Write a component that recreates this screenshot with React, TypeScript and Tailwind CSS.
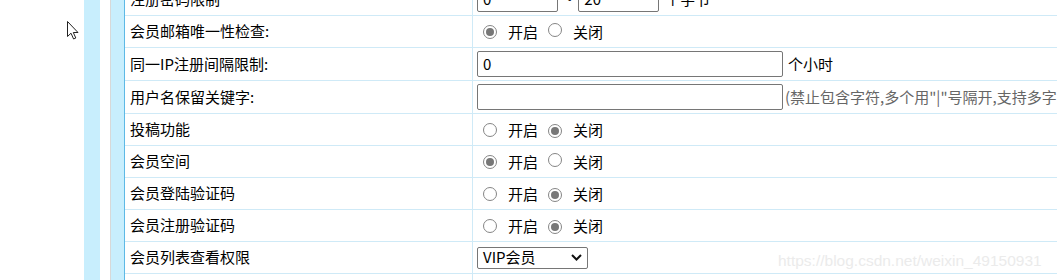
import React from 'react';

const font = "font-['Microsoft_YaHei','Noto_Sans_CJK_SC',sans-serif]";

function Radio({ checked }: { checked?: boolean }) {
  return (
    <span className="inline-flex h-[14px] w-[14px] shrink-0 items-center justify-center rounded-full border border-[#858585] bg-white">
      {checked && <span className="h-[8px] w-[8px] rounded-full bg-[#777]" />}
    </span>
  );
}

function OnOff({ on }: { on: boolean }) {
  return (
    <div className="flex items-center pl-[6px]">
      <Radio checked={on} />
      <span className="ml-[11px] leading-[20px]">开启</span>
      <span className="ml-[10px]">
        <Radio checked={!on} />
      </span>
      <span className="ml-[11px] leading-[20px]">关闭</span>
    </div>
  );
}

function TextBox({ value, w }: { value?: string; w: string }) {
  return (
    <div
      className={`flex h-[26px] items-center rounded-[2px] border border-[#767676] bg-white pl-[5px] text-[15px] ${w}`}
    >
      {value}
    </div>
  );
}

function Select({ value }: { value: string }) {
  return (
    <div className="flex h-[22px] w-[111px] items-center justify-between rounded-[2px] border border-[#767676] bg-white pl-[5px] pr-[5px] text-[15px]">
      <span>{value}</span>
      <svg width="11" height="7" viewBox="0 0 11 7" fill="none">
        <path d="M1 1l4.5 4.5L10 1" stroke="#111" strokeWidth="2" />
      </svg>
    </div>
  );
}

function Row({ label, h, children }: { label: string; h: string; children?: React.ReactNode }) {
  return (
    <div className={`flex shrink-0 border-b border-[#cfeaf7] ${h}`}>
      <div className="flex w-[348px] shrink-0 items-center border-r border-[#cfeaf7] pl-[5px]">{label}</div>
      <div className="flex flex-1 items-center pl-[4px]">{children}</div>
    </div>
  );
}

export default function App() {
  return (
    <div className={`relative flex h-[280px] w-[1057px] overflow-hidden bg-white text-[15px] text-black ${font}`}>
      <div className="relative w-[84px] shrink-0">
        <svg className="absolute left-[67px] top-[21px]" width="13" height="19" viewBox="0 0 13 19">
          <path
            d="M0.5 0.5 L0.5 15.5 L4 12.2 L6.6 18 L8.8 17 L6.3 11.5 L11 11.5 Z"
            fill="#fff"
            stroke="#222"
            strokeWidth="1"
            strokeLinejoin="round"
          />
        </svg>
      </div>
      <div className="w-[16px] shrink-0 bg-[#c8eefd]" />
      <div className="w-[10px] shrink-0 bg-white" />
      <div className="w-[15px] shrink-0 border-l border-r border-l-[#d8d8d8] border-r-[#5db9e6] bg-[#c8eefd]" />
      <div className="mt-[-17px] flex flex-1 flex-col">
        <Row label="注册密码限制" h="h-[33px]">
          <TextBox value="0" w="w-[81px]" />
          <span className="mx-[6px]">~</span>
          <TextBox value="20" w="w-[81px]" />
          <span className="ml-[6px]">个字节</span>
        </Row>
        <Row label="会员邮箱唯一性检查:" h="h-[32px]">
          <OnOff on={true} />
        </Row>
        <Row label="同一IP注册间隔限制:" h="h-[33px]">
          <TextBox value="0" w="w-[306px]" />
          <span className="ml-[5px]">个小时</span>
        </Row>
        <Row label="用户名保留关键字:" h="h-[33px]">
          <TextBox w="w-[306px]" />
          <span className="ml-[2px] whitespace-nowrap text-[#666]">(禁止包含字符,多个用"|"号隔开,支持多字符</span>
        </Row>
        <Row label="投稿功能" h="h-[32px]">
          <OnOff on={false} />
        </Row>
        <Row label="会员空间" h="h-[32px]">
          <OnOff on={true} />
        </Row>
        <Row label="会员登陆验证码" h="h-[32px]">
          <OnOff on={false} />
        </Row>
        <Row label="会员注册验证码" h="h-[32px]">
          <OnOff on={false} />
        </Row>
        <Row label="会员列表查看权限" h="h-[32px]">
          <Select value="VIP会员" />
        </Row>
        <Row label="" h="h-[32px]">
          <div className="mt-[8px] self-start">
            <Select value="VIP会员" />
          </div>
        </Row>
      </div>
      <div className="absolute left-[778px] top-[252px] font-['Liberation_Sans',sans-serif] text-[15.5px] leading-[18px] text-[#ebebeb]">
        https://blog.csdn.net/weixin_49150931
      </div>
    </div>
  );
}
